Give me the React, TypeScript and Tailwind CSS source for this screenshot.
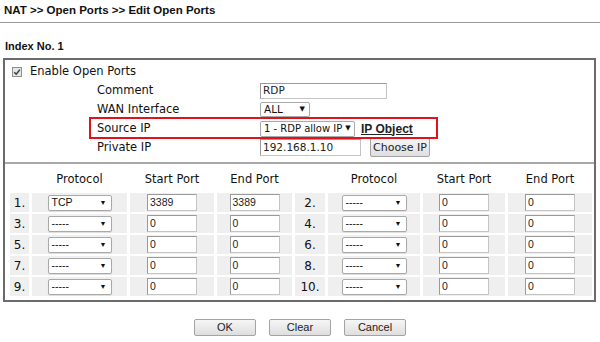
import React from 'react';

const tahoma = { fontFamily: '"DejaVu Sans", Verdana, sans-serif' };

const Select: React.FC<{ value: string; width: string; height?: string; size?: string }> = ({
  value,
  width,
  height = 'h-[16px]',
  size = 'text-[10.5px]',
}) => (
  <div
    className={`${width} ${height} ${size} flex items-center justify-between gap-[3px] bg-white border border-[#a9a9a9] rounded-[2px] pl-[3px] pr-[4px] text-[#111] shadow-[0_1px_1px_rgba(0,0,0,0.08)]`}
  >
    <span className="leading-none whitespace-nowrap">{value}</span>
    <span className="text-[7px] leading-none">▼</span>
  </div>
);

const Input: React.FC<{ value: string; width: string; height?: string }> = ({ value, width, height = 'h-[17px]' }) => (
  <div
    className={`${width} ${height} flex items-center bg-white border border-[#c4c4c4] border-t-[#9a9a9a] border-l-[#9a9a9a] pl-[2px] text-[10.5px] text-[#222] leading-none`}
  >
    {value}
  </div>
);

const Button: React.FC<{ label: string; className?: string }> = ({ label, className = '' }) => (
  <button
    type="button"
    className={`flex items-center justify-center border border-[#a3a3a3] rounded-[2px] bg-gradient-to-b from-[#f6f6f6] to-[#dedede] text-[11px] text-[#222] leading-none ${className}`}
  >
    {label}
  </button>
);

interface PortRow {
  n: string;
  proto: string;
  start: string;
  end: string;
}

const rows: [PortRow, PortRow][] = [
  [{ n: '1.', proto: 'TCP', start: '3389', end: '3389' }, { n: '2.', proto: '-----', start: '0', end: '0' }],
  [{ n: '3.', proto: '-----', start: '0', end: '0' }, { n: '4.', proto: '-----', start: '0', end: '0' }],
  [{ n: '5.', proto: '-----', start: '0', end: '0' }, { n: '6.', proto: '-----', start: '0', end: '0' }],
  [{ n: '7.', proto: '-----', start: '0', end: '0' }, { n: '8.', proto: '-----', start: '0', end: '0' }],
  [{ n: '9.', proto: '-----', start: '0', end: '0' }, { n: '10.', proto: '-----', start: '0', end: '0' }],
];

const gridCols = 'grid grid-cols-[19px_95px_84px_75px_30px_92px_82px_84px] gap-x-[3px]';

const Cells: React.FC<{ r: PortRow; selW: string }> = ({ r, selW }) => (
  <>
    <div className="bg-[#efefef] flex items-center justify-center text-[12px] text-[#111]" style={tahoma}>
      {r.n}
    </div>
    <div className="bg-[#efefef] flex items-center justify-center">
      <Select value={r.proto} width={selW} />
    </div>
    <div className="bg-[#efefef] flex items-center justify-center">
      <Input value={r.start} width="w-[50px]" />
    </div>
    <div className="bg-[#efefef] flex items-center justify-center">
      <Input value={r.end} width="w-[50px]" />
    </div>
  </>
);

export default function App() {
  return (
    <div className="w-[600px] h-[342px] bg-white overflow-hidden" style={{ fontFamily: '"Liberation Sans", Arial, sans-serif' }}>
      <div className="h-[23px] border-b border-[#9a9a9a] px-[4px] text-[11.5px] font-bold leading-[20px] text-[#111]">
        NAT &gt;&gt; Open Ports &gt;&gt; Edit Open Ports
      </div>
      <div className="h-[35px] pt-[16px] px-[5px] text-[11px] font-bold leading-[14px] text-[#111]">Index No. 1</div>

      <div className="ml-[3px] w-[593px] h-[244px] border-2 border-[#6b6b6b]">
        <div className="pt-[3px] h-[102px]">
          <div className="h-[18px] flex items-center pl-[7px] text-[11.5px] text-[#111]" style={tahoma}>
            <svg width="10" height="10" viewBox="0 0 10 10" className="mr-[8px]">
              <rect x="0.5" y="0.5" width="9" height="9" fill="#e6e6e6" stroke="#8f8f8f" />
              <path d="M2.2 5.2 L4.2 7.2 L7.9 2.6" fill="none" stroke="#3c3c3c" strokeWidth="1.5" />
            </svg>
            Enable Open Ports
          </div>

          <div className="ml-[92px] text-[11.5px] text-[#111]" style={tahoma}>
            <div className="h-[19px] flex items-center">
              <span className="w-[163px]">Comment</span>
              <Input value="RDP" width="w-[127px]" height="h-[16px]" />
            </div>
            <div className="h-[19px] flex items-center">
              <span className="w-[163px]">WAN Interface</span>
              <Select value="ALL" width="w-[50px]" height="h-[15px]" />
            </div>
            <div className="h-[19px] flex items-center relative">
              <div className="absolute -left-[8px] -top-[2px] w-[349px] h-[22px] border-2 border-[#e2121c]" />
              <span className="w-[163px]">Source IP</span>
              <Select value="1 - RDP allow IP" width="w-[95px]" size="text-[10px]" />
              <span
                className="ml-[6px] text-[12px] font-bold underline text-[#222]"
                style={{ fontFamily: '"Liberation Sans", Arial, sans-serif' }}
              >
                IP Object
              </span>
            </div>
            <div className="h-[19px] flex items-center">
              <span className="w-[163px]">Private IP</span>
              <Input value="192.168.1.10" width="w-[101px]" />
              <Button label="Choose IP" className="ml-[9px] w-[60px] h-[19px]" />
            </div>
          </div>
        </div>

        <div className="h-[2px] bg-[#a8a8a8]" />

        <div className="pt-[6px] pl-[5px]">
          <div className={`${gridCols} h-[20px] text-[11.5px] text-[#111]`} style={tahoma}>
            <div />
            <div className="flex items-center justify-center">Protocol</div>
            <div className="flex items-center justify-center">Start Port</div>
            <div className="flex items-center justify-center">End Port</div>
            <div />
            <div className="flex items-center justify-center">Protocol</div>
            <div className="flex items-center justify-center">Start Port</div>
            <div className="flex items-center justify-center">End Port</div>
          </div>
          <div className={`${gridCols} auto-rows-[19px] gap-y-[2px] mt-[3px]`}>
            {rows.map(([a, b]) => (
              <React.Fragment key={a.n}>
                <Cells r={a} selW="w-[64px]" />
                <Cells r={b} selW="w-[65px]" />
              </React.Fragment>
            ))}
          </div>
        </div>
      </div>

      <div className="mt-[17px] flex justify-center gap-[13px]">
        <Button label="OK" className="w-[62px] h-[17px]" />
        <Button label="Clear" className="w-[62px] h-[17px]" />
        <Button label="Cancel" className="w-[62px] h-[17px]" />
      </div>
    </div>
  );
}
